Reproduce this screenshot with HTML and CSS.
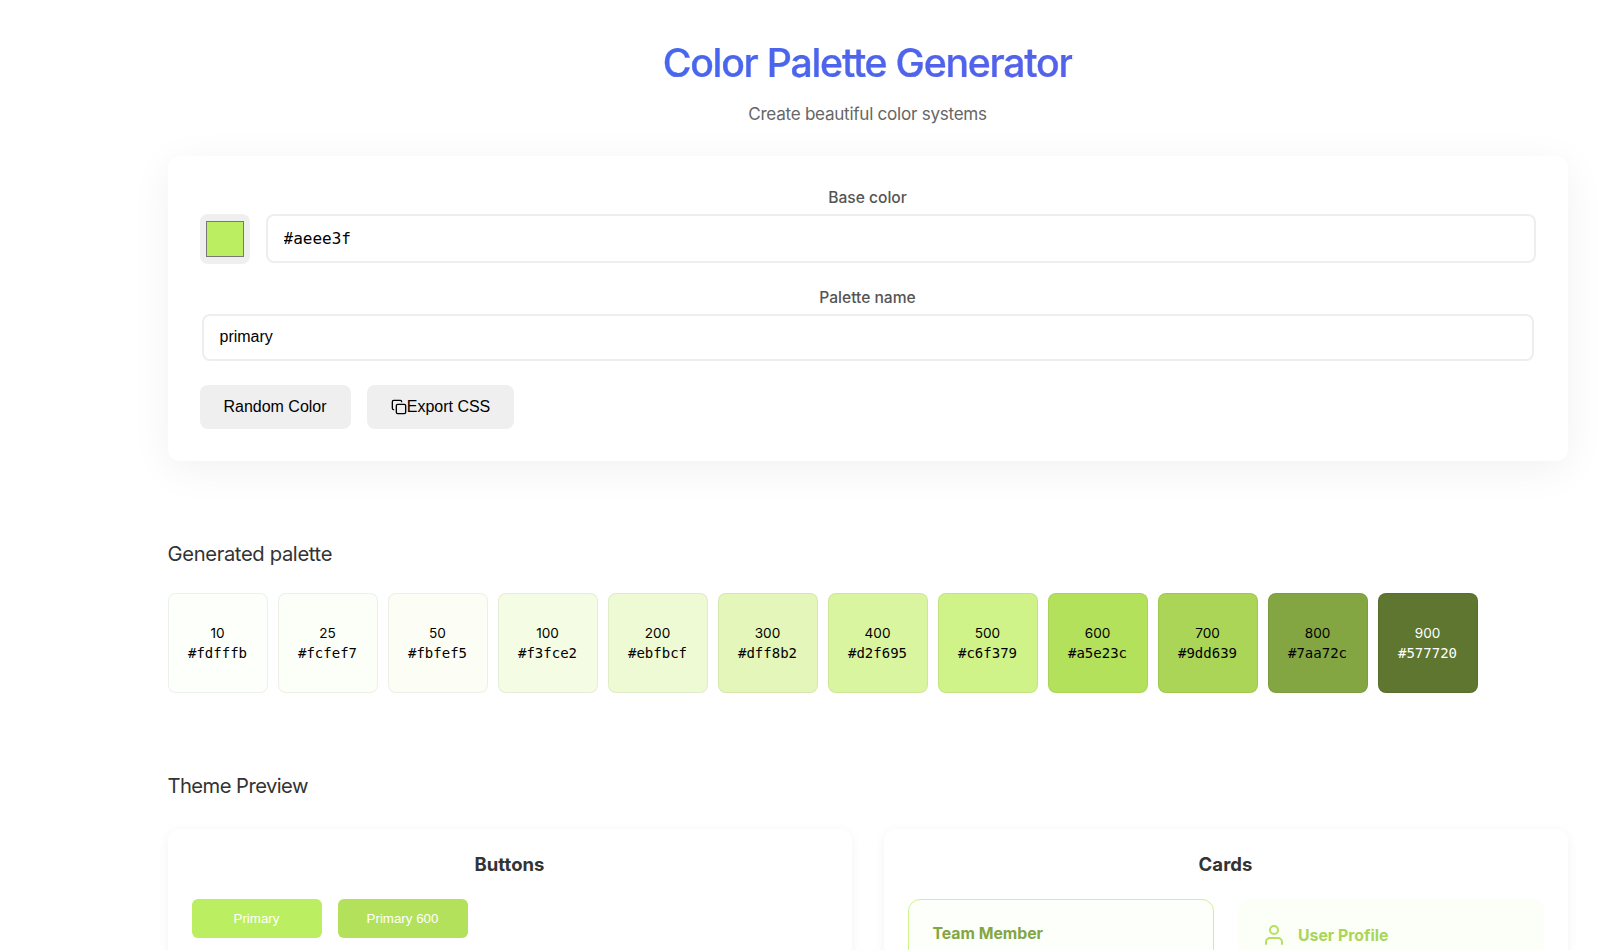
FILE: index.html
```html
<!DOCTYPE html>
<html lang="en">
<head>
<meta charset="utf-8">
<title>Color Palette Generator</title>
<link rel="stylesheet" href="styles.css">
</head>
<body>
<main class="app">
  <header class="header">
    <h1 class="title"><span class="title-text">Color Palette Generator</span></h1>
    <p class="subtitle">Create beautiful color systems</p>
  </header>
  <section class="controls">
    <label class="label" for="hex">Base color</label>
    <div class="color-row">
      <div class="color-input"><span class="color-chip"></span></div>
      <input class="field hex-field" id="hex" type="text" value="#aeee3f">
    </div>
    <label class="label" for="name">Palette name</label>
    <input class="field name-field" id="name" type="text" value="primary">
    <div class="actions">
      <button class="action random">Random Color</button>
      <button class="action export"><svg class="copy-icon" viewBox="0 0 24 24" fill="none" stroke="currentColor" stroke-width="2" stroke-linecap="round" stroke-linejoin="round"><rect x="8" y="8" width="14" height="14" rx="2"/><path d="M4 16c-1.100 0-2-.9-2-2V4c0-1.100.9-2 2-2h10c1.100 0 2 .9 2 2"/></svg>Export CSS</button>
    </div>
  </section>
  <h2 class="section-title">Generated palette</h2>
  <div class="palette">
    <div class="swatch s10"><span>10</span><code>#fdfffb</code></div>
    <div class="swatch s25"><span>25</span><code>#fcfef7</code></div>
    <div class="swatch s50"><span>50</span><code>#fbfef5</code></div>
    <div class="swatch s100"><span>100</span><code>#f3fce2</code></div>
    <div class="swatch s200"><span>200</span><code>#ebfbcf</code></div>
    <div class="swatch s300"><span>300</span><code>#dff8b2</code></div>
    <div class="swatch s400"><span>400</span><code>#d2f695</code></div>
    <div class="swatch s500"><span>500</span><code>#c6f379</code></div>
    <div class="swatch s600"><span>600</span><code>#a5e23c</code></div>
    <div class="swatch s700"><span>700</span><code>#9dd639</code></div>
    <div class="swatch s800"><span>800</span><code>#7aa72c</code></div>
    <div class="swatch s900"><span>900</span><code>#577720</code></div>
  </div>
  <h2 class="section-title preview-title">Theme Preview</h2>
  <div class="previews">
    <section class="preview">
      <h3 class="preview-heading">Buttons</h3>
      <div class="demo-buttons">
        <button class="demo-button">Primary</button>
        <button class="demo-button dark">Primary 600</button>
      </div>
    </section>
    <section class="preview">
      <h3 class="preview-heading">Cards</h3>
      <div class="demo-cards">
        <article class="demo-card team"><h4>Team Member</h4></article>
        <article class="demo-card profile">
          <svg class="user-icon" viewBox="0 0 24 24" fill="none" stroke="currentColor" stroke-width="2" stroke-linecap="round" stroke-linejoin="round"><path d="M20 21v-2a4 4 0 0 0-4-4H8a4 4 0 0 0-4 4v2"/><circle cx="12" cy="7" r="4"/></svg>
          <h4>User Profile</h4>
        </article>
      </div>
    </section>
  </div>
</main>
</body>
</html>
```
FILE: styles.css
```css
* { box-sizing: border-box; }
body { margin: 0; background: #fff; color: #333; font-family: Inter, sans-serif; }
h1, h2, h3, h4, p { margin: 0; }
button { font-family: "Liberation Sans", Arial, sans-serif; border: 0; color: #000; }
.app { width: 1400px; height: 950px; margin-left: 167.5px; padding-top: 32px; overflow-x: visible; overflow-y: clip; }
.header { text-align: center; height: 124px; }
.title { font-size: 39.2px; font-weight: 500; line-height: 61px; letter-spacing: -1.24px; }
.title-text { background: linear-gradient(90deg, #4667ee, #5561e9); background-clip: text; -webkit-background-clip: text; color: transparent; -webkit-text-stroke: 0.2px #4e64ec; }
.subtitle { margin-top: 9px; font-size: 17.1px; line-height: 24px; letter-spacing: -0.27px; color: #666; }
.controls { height: 305px; padding: 29px 32px 32px; border-radius: 12px; background: #fff; box-shadow: 0 8px 40px rgba(0, 0, 0, 0.06); }
.label { display: block; height: 29px; line-height: 25px; text-align: center; font-size: 15.6px; font-weight: 500; color: #555; }
.color-row { display: flex; gap: 16px; height: 50px; margin-bottom: 21px; }
.color-input { width: 50px; height: 50px; padding: 7px 6px; border-radius: 8px; background: #efefef; }
.color-chip { display: block; width: 38px; height: 36px; border: 1px solid #777; background: #bbee60; }
.field { display: block; padding: 0 16px; border: 2px solid #eee; border-radius: 8px; background: #fff; font-size: 16px; color: #000; outline: 0; }
.hex-field { flex: 1; height: 49px; font-family: "DejaVu Sans Mono", monospace; }
.name-field { width: 1332px; height: 47px; margin: 0 2px 24px; padding-bottom: 2px; font-family: "Liberation Sans", Arial, sans-serif; }
.actions { display: flex; gap: 16px; }
.action { display: flex; align-items: center; justify-content: center; height: 44px; padding: 0; border-radius: 8px; background: #efefef; font-size: 16px; }
.random { width: 151px; }
.export { width: 147px; padding-left: 1px; }
.copy-icon { width: 16px; height: 16px; }
.section-title { margin-top: 76px; font-size: 20.2px; font-weight: 400; line-height: 34px; letter-spacing: -0.35px; }
.palette { display: flex; gap: 10px; margin-top: 22px; }
.swatch { display: flex; flex-direction: column; align-items: center; justify-content: center; width: 100px; height: 100px; border: 1px solid rgba(0, 0, 0, 0.06); border-radius: 8px; color: #000; font-size: 13.6px; line-height: 20px; }
.swatch code { font-family: "DejaVu Sans Mono", monospace; font-size: 14px; }
.s10 { background: #fdfffb; }
.s25 { background: #fcfff8; }
.s50 { background: #fcfef6; }
.s100 { background: #f4fce4; }
.s200 { background: #eefad4; }
.s300 { background: #e4f6b9; }
.s400 { background: #daf5a0; }
.s500 { background: #cff388; }
.s600 { background: #b3e15c; }
.s700 { background: #aad556; }
.s800 { background: #84a642; }
.s900 { background: #5e762f; color: #fff; }
.preview-title { margin-top: 76px; letter-spacing: -0.55px; }
.previews { display: grid; grid-template-columns: 1fr 1fr; gap: 32px; margin-top: 26px; }
.preview { height: 400px; padding: 20px 24px 24px; border-radius: 12px; background: #fff; box-shadow: 0 2px 12px rgba(0, 0, 0, 0.05); }
.preview-heading { height: 50px; text-align: center; font-size: 18.5px; font-weight: 700; line-height: 30px; letter-spacing: 0.05px; }
.demo-buttons { display: flex; gap: 16px; }
.demo-button { width: 130px; height: 39px; border-radius: 6px; background: #bbee60; color: #fff; font-size: 13.333px; }
.dark { background: #b3e15c; }
.demo-cards { display: grid; grid-template-columns: 1fr 1fr; gap: 24px; }
.demo-card { height: 200px; padding: 24px; border-radius: 12px; }
.demo-card h4 { font-size: 15.8px; font-weight: 700; line-height: 25px; }
.team { border: 1px solid #cff388; background: #fdfffb; padding-top: 21px; color: #84a642; }
.profile { display: flex; gap: 12.5px; background: #fcfff8; color: #aad556; }
.user-icon { width: 24px; height: 24px; color: #b3e15c; }
```
